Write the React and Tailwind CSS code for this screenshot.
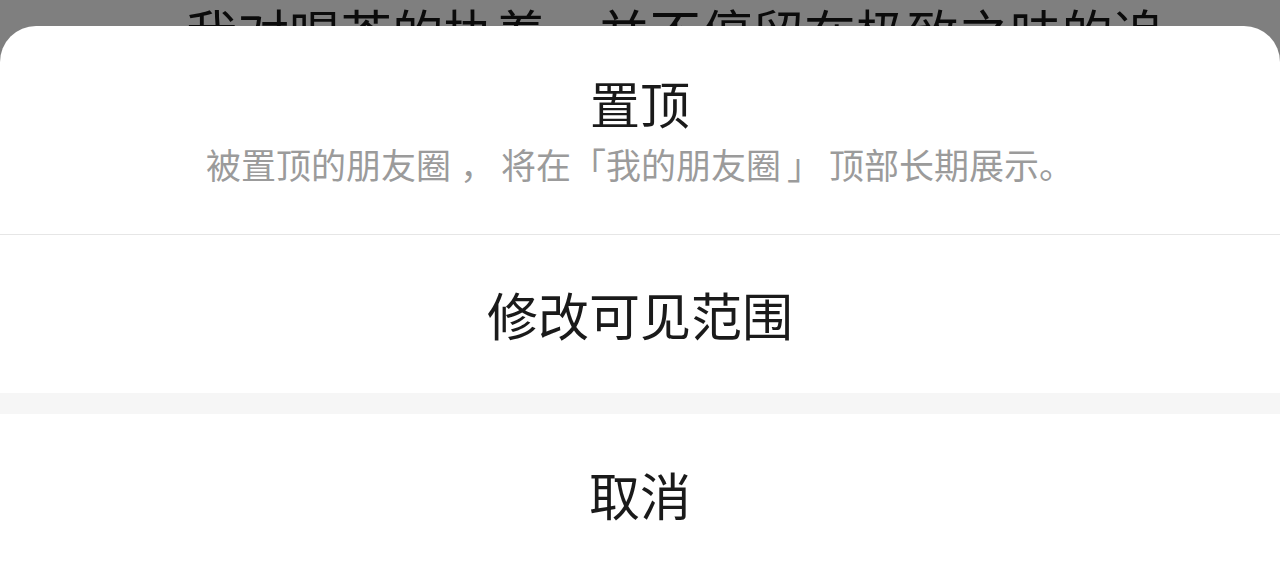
export default function App() {
  const font = { fontFamily: '"Noto Sans CJK SC", "Noto Sans", sans-serif' };

  return (
    <div className="w-[1280px] h-[576px] overflow-hidden bg-[#7f7f7f] flex flex-col" style={font}>
      {/* dimmed post text behind the sheet */}
      <div className="h-[26px] shrink-0 overflow-hidden pl-[186px] pt-[5px]">
        <p className="text-[51.5px] leading-none text-[#0b0b0b] whitespace-nowrap">
          我对喝茶的执着，并不停留在极致之味的追
        </p>
      </div>

      {/* action sheet */}
      <div className="flex-1 bg-white rounded-t-[36px] flex flex-col">
        <button className="h-[209px] shrink-0 flex flex-col items-center justify-center gap-[19px] pb-[2px] border-b border-[#e6e6e6]">
          <span className="text-[50px] leading-[50px] text-[#1a1a1a]">置顶</span>
          <span className="text-[35px] leading-[35px] text-[#9b9b9b] whitespace-nowrap">
            被置顶的朋友圈<span className="ml-[9px] mr-[6px]">，</span>将在「我的朋友圈
            <span className="ml-[6px] mr-[7px]">」</span>顶部长期展示。
          </span>
        </button>

        <button className="h-[158px] shrink-0 flex items-center justify-center">
          <span className="text-[51px] leading-[51px] text-[#1a1a1a]">修改可见范围</span>
        </button>

        <div className="h-[21px] shrink-0 bg-[#f6f6f6]" />

        <button className="flex-1 flex items-center justify-center pb-[2px]">
          <span className="text-[51px] leading-[51px] text-[#1a1a1a]">取消</span>
        </button>
      </div>
    </div>
  );
}
